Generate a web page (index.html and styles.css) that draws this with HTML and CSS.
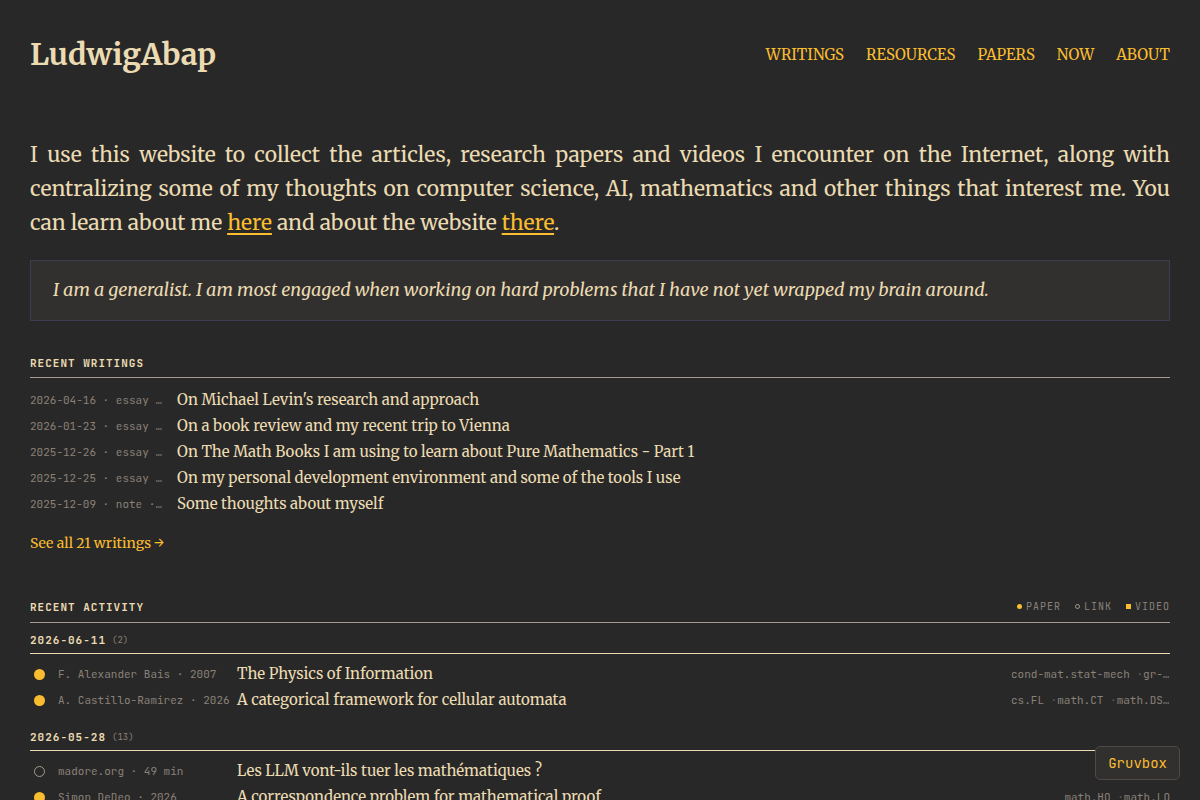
FILE: index.html
```html
<!DOCTYPE html>
<html lang="en">
<head>
    <meta charset="UTF-8">
    <meta name="viewport" content="width=device-width, initial-scale=1.0">
    <title>LudwigAbap</title>
    <link rel="stylesheet" href="styles.css">
</head>
<body>
    <header class="site-header">
        <h1 class="site-title">LudwigAbap</h1>
        <nav class="site-nav">
            <a href="#">WRITINGS</a>
            <a href="#">RESOURCES</a>
            <a href="#">PAPERS</a>
            <a href="#">NOW</a>
            <a href="#">ABOUT</a>
        </nav>
    </header>

    <main>
        <p class="intro">I use this website to collect the articles, research papers and videos I encounter on the Internet, along with centralizing some of my thoughts on computer science, AI, mathematics and other things that interest me. You can learn about me <a href="#">here</a> and about the website <a href="#">there</a>.</p>

        <blockquote class="quote">I am a generalist. I am most engaged when working on hard problems that I have not yet wrapped my brain around.</blockquote>

        <section class="writings">
            <div class="section-head">
                <h2>RECENT WRITINGS</h2>
            </div>
            <ul class="list">
                <li class="writing"><span class="meta">2026-04-16 · essay · 12 min</span><a href="#">On Michael Levin's research and approach</a></li>
                <li class="writing"><span class="meta">2026-01-23 · essay · 9 min</span><a href="#">On a book review and my recent trip to Vienna</a></li>
                <li class="writing"><span class="meta">2025-12-26 · essay · 14 min</span><a href="#">On The Math Books I am using to learn about Pure Mathematics - Part 1</a></li>
                <li class="writing"><span class="meta">2025-12-25 · essay · 10 min</span><a href="#">On my personal development environment and some of the tools I use</a></li>
                <li class="writing"><span class="meta">2025-12-09 · note · 4 min</span><a href="#">Some thoughts about myself</a></li>
            </ul>
            <a class="see-all" href="#">See all 21 writings →</a>
        </section>

        <section class="activity">
            <div class="section-head">
                <h2>RECENT ACTIVITY</h2>
                <div class="legend">
                    <span class="key"><i class="mark paper"></i>PAPER</span>
                    <span class="key"><i class="mark link"></i>LINK</span>
                    <span class="key"><i class="mark video"></i>VIDEO</span>
                </div>
            </div>

            <h3 class="day">2026-06-11 <span class="count">(2)</span></h3>
            <ul class="list">
                <li class="entry"><i class="dot paper"></i><span class="meta">F. Alexander Bais · 2007</span><a href="#">The Physics of Information</a><span class="tags"><span>cond-mat.stat-mech</span> <span>gr-qc</span></span></li>
                <li class="entry"><i class="dot paper"></i><span class="meta">A. Castillo-Ramirez · 2026</span><a href="#">A categorical framework for cellular automata</a><span class="tags"><span>cs.FL</span> <span>math.CT</span> <span>math.DS</span> <span>math.GR</span></span></li>
            </ul>

            <h3 class="day">2026-05-28 <span class="count">(13)</span></h3>
            <ul class="list">
                <li class="entry"><i class="dot link"></i><span class="meta">madore.org · 49 min</span><a href="#">Les LLM vont-ils tuer les mathématiques ?</a></li>
                <li class="entry"><i class="dot paper"></i><span class="meta">Simon DeDeo · 2026</span><a href="#">A correspondence problem for mathematical proof</a><span class="tags"><span>math.HO</span> <span>math.LO</span></span></li>
            </ul>
        </section>
    </main>

    <button class="theme-toggle" type="button">Gruvbox</button>
</body>
</html>
```
FILE: styles.css
```css
:root {
    --bg: #282828;
    --bg-soft: #32302f;
    --text: #ebdbb2;
    --muted: #8a8178;
    --rule: #a39b8d;
    --accent: #fabd2f;
    --serif: Merriweather, "Noto Serif", "Liberation Serif", serif;
    --mono: "JetBrains Mono", "DejaVu Sans Mono", monospace;
}

* {
    box-sizing: border-box;
}

body {
    margin: 0;
    padding: 0 30px;
    background: var(--bg);
    color: var(--text);
    font-family: var(--serif);
    font-size: 15px;
}

a {
    color: var(--accent);
    text-decoration: none;
}

h1, h2, h3, p, ul, blockquote {
    margin: 0;
    padding: 0;
}

.site-header {
    display: flex;
    justify-content: space-between;
    align-items: center;
    height: 108px;
    margin-bottom: 30px;
}

.site-title {
    font-size: 30px;
}

.site-nav {
    display: flex;
    gap: 22px;
}

.intro {
    font-size: 21px;
    line-height: 34px;
    text-align: justify;
    margin-bottom: 20px;
}

.intro a {
    text-decoration: underline;
    text-underline-offset: 3px;
}

.quote {
    padding: 15px 22px 16px;
    border: 1px solid #3c3d52;
    background: var(--bg-soft);
    font-size: 18px;
    font-style: italic;
    line-height: 28px;
}

.section-head {
    display: flex;
    justify-content: space-between;
    align-items: center;
    padding-bottom: 5px;
    border-bottom: 1px solid var(--rule);
}

.section-head h2,
.day {
    font-family: var(--mono);
    font-size: 11px;
    letter-spacing: 1px;
    line-height: 18px;
}

.writings {
    padding-top: 33px;
}

.writings .list {
    padding-top: 9px;
}

.list {
    list-style: none;
}

.list a {
    color: var(--text);
}

.writing,
.entry {
    display: grid;
    align-items: center;
    line-height: 26px;
}

.writing {
    grid-template-columns: 133px 1fr;
    column-gap: 14px;
}

.meta,
.tags {
    overflow: hidden;
    color: var(--muted);
    font-family: var(--mono);
    font-size: 11px;
    text-overflow: ellipsis;
    white-space: nowrap;
}

.see-all {
    display: block;
    width: fit-content;
    margin-top: 14px;
    font-size: 14px;
    line-height: 24px;
}

.activity {
    padding-top: 41px;
}

.legend {
    display: flex;
    gap: 14px;
    color: var(--muted);
    font-family: var(--mono);
    font-size: 10px;
    letter-spacing: 1px;
    line-height: 21px;
}

.key {
    display: flex;
    align-items: center;
    gap: 4px;
}

.mark {
    width: 5px;
    height: 5px;
}

.dot {
    width: 11px;
    height: 11px;
    margin-left: 4px;
}

.paper {
    border-radius: 50%;
    background: var(--accent);
}

.link {
    border: 1px solid var(--rule);
    border-radius: 50%;
}

.video {
    background: var(--accent);
}

.day {
    display: flex;
    align-items: center;
    gap: 6px;
    padding: 8px 0 4px;
    border-bottom: 1px solid var(--text);
}

.count {
    color: var(--muted);
    font-size: 9px;
    font-weight: normal;
    letter-spacing: 0;
}

.activity .list {
    padding: 7px 0;
}

.entry {
    grid-template-columns: 21px 172px 1fr auto;
    column-gap: 7px;
}

.tags {
    max-width: 159px;
}

.tags span + span::before {
    content: "·";
    opacity: 0.6;
}

.theme-toggle {
    position: fixed;
    right: 20px;
    bottom: 20px;
    padding: 8px 12px;
    border: 1px solid #504945;
    border-radius: 5px;
    background: var(--bg-soft);
    color: var(--accent);
    font-family: var(--mono);
    font-size: 14px;
    line-height: 16px;
}
```
